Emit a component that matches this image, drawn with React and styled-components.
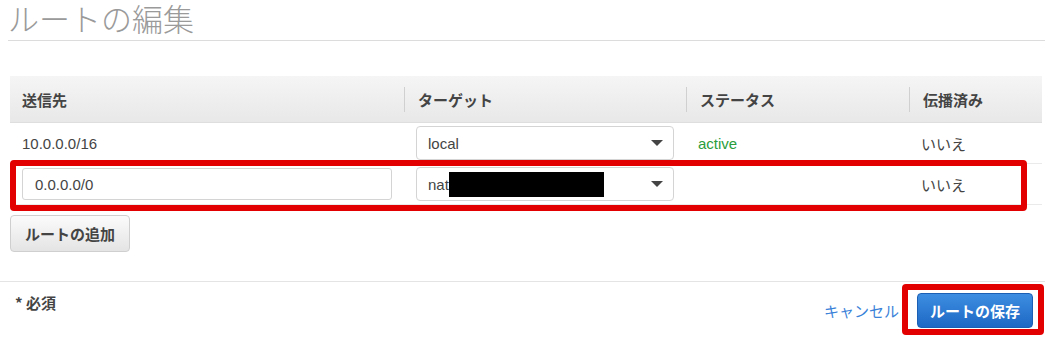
import React from "react";
import styled, { createGlobalStyle } from "styled-components";

const GlobalStyle = createGlobalStyle`
  body {
    margin: 0;
    background: #fff;
    font-family: "Liberation Sans", "Noto Sans CJK JP", sans-serif;
    color: #444;
  }
`;

const Page = styled.div`
  width: 1045px;
  height: 338px;
  overflow: hidden;
`;

const Title = styled.h1`
  margin: 0 0 0 8px;
  padding: 0 0 4px;
  border-bottom: 1px solid #dcdcdc;
  font-family: "Noto Sans CJK JP", sans-serif;
  font-weight: 300;
  font-size: 31px;
  line-height: 36px;
  color: #9a9a9a;
`;

const Table = styled.div`
  margin: 35px 0 0 10px;
  width: 1032px;
`;

const Row = styled.div`
  position: relative;
  display: grid;
  grid-template-columns: 394px 282px 223px 133px;
  height: ${p => (p.$head ? "46px" : "40px")};
  align-items: center;
  background: ${p => (p.$head ? "linear-gradient(#f5f5f5, #e8e8e8)" : "#fff")};
  border-bottom: 1px solid ${p => (p.$head ? "#dedede" : "#eaeaea")};
`;

const HeadCell = styled.div`
  position: relative;
  padding-left: ${p => (p.$first ? "12px" : "14px")};
  font-family: "Noto Sans CJK JP", sans-serif;
  font-weight: 700;
  font-size: 15px;
  color: #444;

  &::before {
    content: "";
    display: ${p => (p.$first ? "none" : "block")};
    position: absolute;
    left: 0;
    top: -2px;
    bottom: -2px;
    border-left: 1px solid #d0d0d0;
  }
`;

const Cell = styled.div`
  padding-left: 12px;
  font-size: 15px;
  color: ${p => p.$color || "#444"};
  font-family: ${p =>
    p.$jp ? '"Noto Sans CJK JP", sans-serif' : '"Liberation Sans", sans-serif'};
`;

const FieldCell = styled.div`
  padding-left: ${p => p.$left}px;
`;

const Input = styled.div`
  box-sizing: border-box;
  width: 370px;
  height: 32px;
  border: 1px solid #d4d4d4;
  border-radius: 3px;
  padding-left: 12px;
  display: flex;
  align-items: center;
  font-size: 15px;
  color: #444;
`;

const Select = styled.div`
  box-sizing: border-box;
  width: 258px;
  height: 34px;
  border: 1px solid #d4d4d4;
  border-radius: 4px;
  padding: 0 10px 0 11px;
  display: flex;
  align-items: center;
  font-size: 15px;
  color: #444;
`;

const Redacted = styled.span`
  display: inline-block;
  width: 155px;
  height: 25px;
  background: #000;
`;

const Caret = styled.span`
  margin-left: auto;
  width: 0;
  height: 0;
  border-left: 6px solid transparent;
  border-right: 6px solid transparent;
  border-top: 6px solid #444;
`;

const Highlight = styled.div`
  position: absolute;
  pointer-events: none;
  box-sizing: border-box;
  border: 6px solid #e20000;
  border-radius: 4px;
  left: ${p => p.$l}px;
  top: ${p => p.$t}px;
  width: ${p => p.$w}px;
  height: ${p => p.$h}px;
`;

const Button = styled.button`
  box-sizing: border-box;
  height: ${p => (p.$primary ? "35px" : "37px")};
  padding: 0 ${p => (p.$primary ? "12px" : "14px")};
  border-radius: 4px;
  border: 1px solid ${p => (p.$primary ? "#1a5fb4" : "#cfcfcf")};
  background: ${p =>
    p.$primary
      ? "linear-gradient(#3d8ee2, #1d68c4)"
      : "linear-gradient(#fbfbfb, #e4e4e4)"};
  color: ${p => (p.$primary ? "#fff" : "#444")};
  font-family: "Noto Sans CJK JP", sans-serif;
  font-weight: 700;
  font-size: 15px;
`;

const AddWrap = styled.div`
  margin: 10px 0 0 10px;
`;

const Footer = styled.div`
  margin-top: 29px;
  border-top: 1px solid #e4e4e4;
  display: flex;
  justify-content: space-between;
  padding: 11px 12px 0 15px;
`;

const Required = styled.div`
  font-family: "Noto Sans CJK JP", sans-serif;
  font-weight: 700;
  font-size: 15px;
  line-height: 20px;
  color: #444;
`;

const Actions = styled.div`
  display: flex;
  align-items: center;
  gap: 18px;
`;

const Link = styled.span`
  font-family: "Noto Sans CJK JP", sans-serif;
  font-size: 15px;
  color: #3b82d9;
`;

const SaveWrap = styled.div`
  position: relative;
`;

export default function App() {
  return (
    <Page>
      <GlobalStyle />
      <Title>ルートの編集</Title>
      <Table>
        <Row $head>
          <HeadCell $first>送信先</HeadCell>
          <HeadCell>ターゲット</HeadCell>
          <HeadCell>ステータス</HeadCell>
          <HeadCell>伝播済み</HeadCell>
        </Row>
        <Row>
          <Cell>10.0.0.0/16</Cell>
          <FieldCell $left={12}>
            <Select>
              local
              <Caret />
            </Select>
          </FieldCell>
          <Cell $color="#2a9d3c">active</Cell>
          <Cell $jp>いいえ</Cell>
        </Row>
        <Row>
          <FieldCell $left={12}>
            <Input>0.0.0.0/0</Input>
          </FieldCell>
          <FieldCell $left={12}>
            <Select>
              nat
              <Redacted />
              <Caret />
            </Select>
          </FieldCell>
          <Cell />
          <Cell $jp>いいえ</Cell>
          <Highlight $l={0} $t={-4} $w={1017} $h={51} />
        </Row>
      </Table>
      <AddWrap>
        <Button>ルートの追加</Button>
      </AddWrap>
      <Footer>
        <Required>* 必須</Required>
        <Actions>
          <Link>キャンセル</Link>
          <SaveWrap>
            <Button $primary>ルートの保存</Button>
            <Highlight $l={-15} $t={-9} $w={142} $h={51} />
          </SaveWrap>
        </Actions>
      </Footer>
    </Page>
  );
}
